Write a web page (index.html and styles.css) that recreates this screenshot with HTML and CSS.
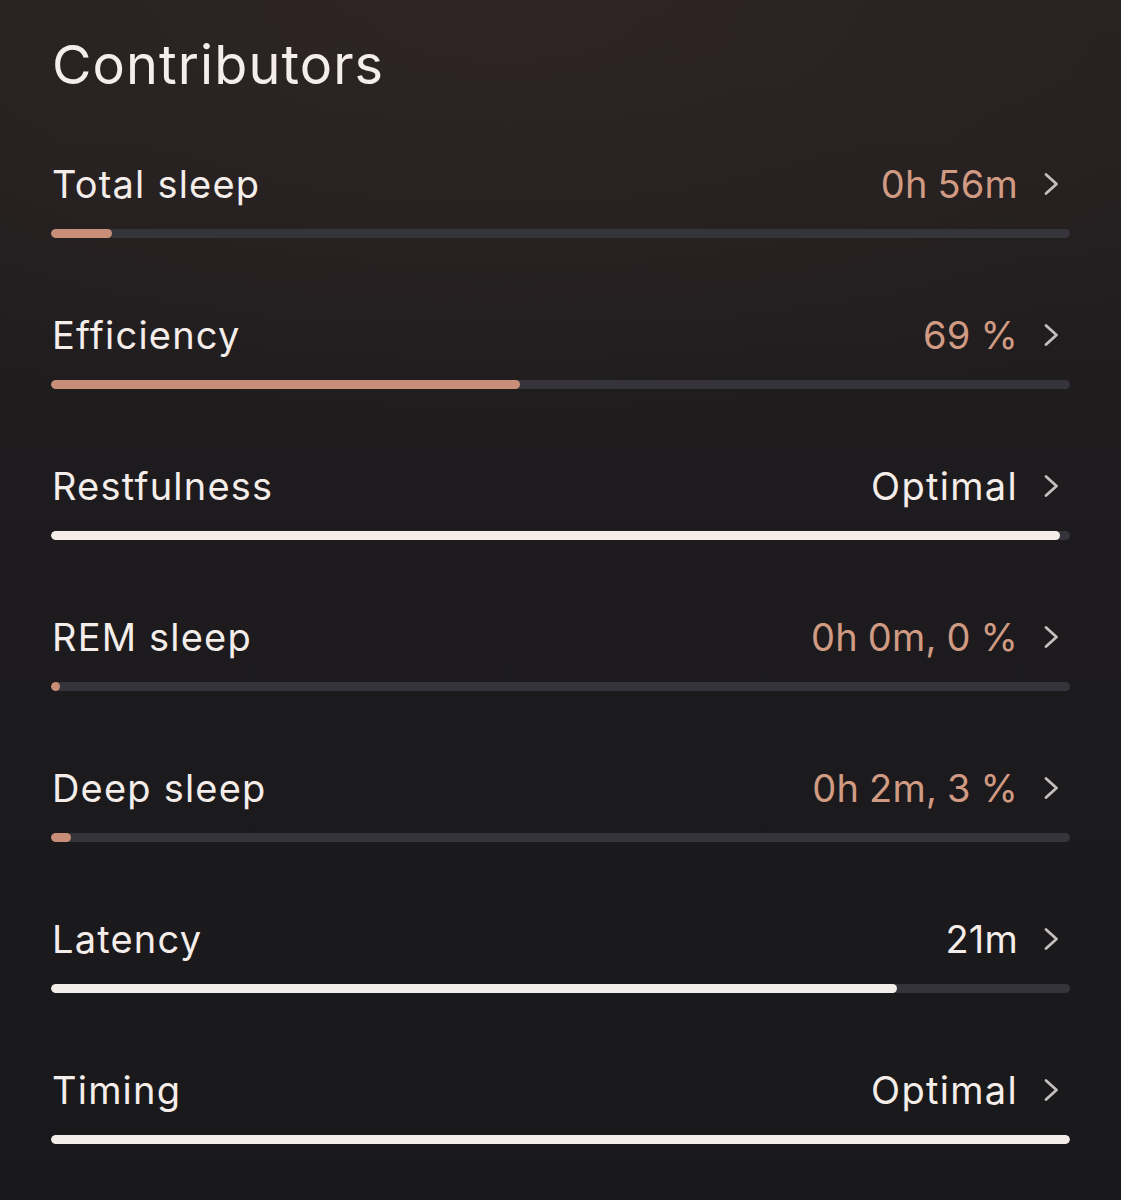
FILE: index.html
```html
<!DOCTYPE html>
<html lang="en">
<head>
    <meta charset="UTF-8">
    <meta name="viewport" content="width=device-width, initial-scale=1.0">
    <title>Contributors</title>
    <link rel="stylesheet" href="styles.css">
</head>
<body>
    <div class="panel">
        <h1 class="title">Contributors</h1>

        <div class="row">
            <div class="row-head">
                <span class="label">Total sleep</span>
                <span class="value warm">0h 56m</span>
                <svg class="chevron" viewBox="0 0 16 24"><path d="M3 2.5 L13.5 12 L3 21.5"/></svg>
            </div>
            <div class="track"><div class="fill warm-fill" style="width: 6%"></div></div>
        </div>

        <div class="row">
            <div class="row-head">
                <span class="label">Efficiency</span>
                <span class="value warm">69 %</span>
                <svg class="chevron" viewBox="0 0 16 24"><path d="M3 2.5 L13.5 12 L3 21.5"/></svg>
            </div>
            <div class="track"><div class="fill warm-fill" style="width: 46%"></div></div>
        </div>

        <div class="row">
            <div class="row-head">
                <span class="label">Restfulness</span>
                <span class="value wordy">Optimal</span>
                <svg class="chevron" viewBox="0 0 16 24"><path d="M3 2.5 L13.5 12 L3 21.5"/></svg>
            </div>
            <div class="track"><div class="fill" style="width: 99%"></div></div>
        </div>

        <div class="row">
            <div class="row-head">
                <span class="label">REM sleep</span>
                <span class="value warm">0h 0m, 0 %</span>
                <svg class="chevron" viewBox="0 0 16 24"><path d="M3 2.5 L13.5 12 L3 21.5"/></svg>
            </div>
            <div class="track"><div class="fill warm-fill" style="width: 9px"></div></div>
        </div>

        <div class="row">
            <div class="row-head">
                <span class="label">Deep sleep</span>
                <span class="value warm">0h 2m, 3 %</span>
                <svg class="chevron" viewBox="0 0 16 24"><path d="M3 2.5 L13.5 12 L3 21.5"/></svg>
            </div>
            <div class="track"><div class="fill warm-fill" style="width: 2%"></div></div>
        </div>

        <div class="row">
            <div class="row-head">
                <span class="label">Latency</span>
                <span class="value">21m</span>
                <svg class="chevron" viewBox="0 0 16 24"><path d="M3 2.5 L13.5 12 L3 21.5"/></svg>
            </div>
            <div class="track"><div class="fill" style="width: 83%"></div></div>
        </div>

        <div class="row">
            <div class="row-head">
                <span class="label">Timing</span>
                <span class="value wordy">Optimal</span>
                <svg class="chevron" viewBox="0 0 16 24"><path d="M3 2.5 L13.5 12 L3 21.5"/></svg>
            </div>
            <div class="track"><div class="fill" style="width: 100%"></div></div>
        </div>
    </div>
</body>
</html>
```

FILE: styles.css
```css
html, body {
    margin: 0;
    height: 100%;
}
body {
    font-family: 'Inter', 'Liberation Sans', sans-serif;
    color: #f4ede9;
    background: radial-gradient(ellipse 90% 35% at 45% 0%, #2e2524 0%, rgba(42, 34, 33, 0) 100%),
                linear-gradient(180deg, #262020 0%, #1d1b1e 45%, #19181b 100%);
}
.panel {
    padding: 33px 51px 0 51px;
}
.title {
    margin: 0 0 63px 1px;
    font-size: 54px;
    line-height: 64px;
    font-weight: 400;
    letter-spacing: 1.1px;
}
.row {
    margin-bottom: 73px;
}
.row-head {
    display: flex;
    align-items: center;
    height: 48px;
    margin-bottom: 21px;
}
.label {
    flex: 1;
    margin-left: 1px;
    font-size: 38px;
    letter-spacing: 1.2px;
}
.value {
    font-size: 38px;
    letter-spacing: 0.2px;
    word-spacing: -1px;
}
.wordy {
    letter-spacing: 1.3px;
}
.warm {
    color: #d09b82;
}
.chevron {
    width: 16px;
    height: 24px;
    margin: 0 11px 0 25px;
    fill: none;
    stroke: #c4bfbd;
    stroke-width: 2.8;
    stroke-linecap: round;
    stroke-linejoin: round;
}
.track {
    height: 9px;
    border-radius: 5px;
    background-color: #34343a;
    overflow: hidden;
}
.fill {
    height: 100%;
    border-radius: 5px;
    background-color: #f4ede9;
}
.warm-fill {
    background-color: #c98e77;
}
```
